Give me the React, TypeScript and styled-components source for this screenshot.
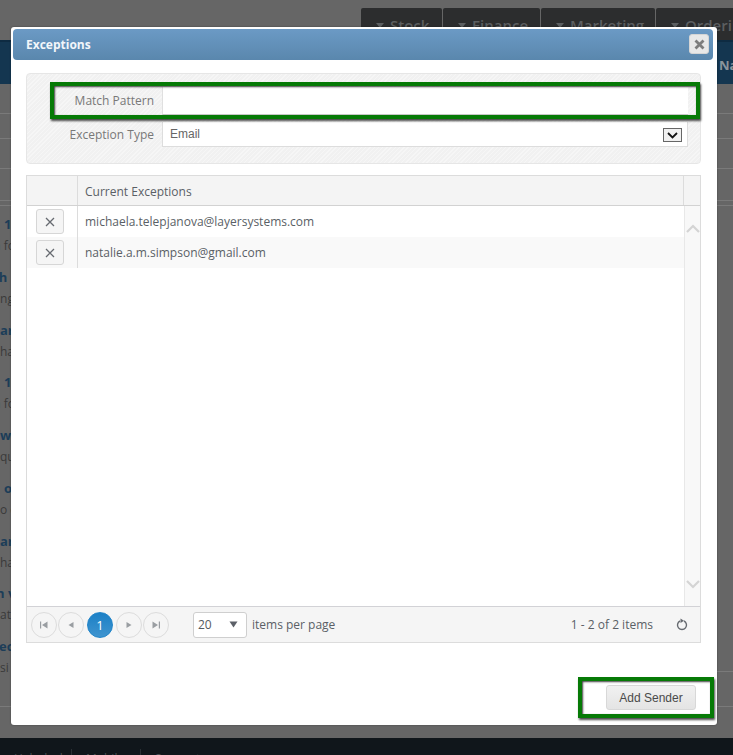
import React from 'react';
import styled, { createGlobalStyle } from 'styled-components';

const GlobalStyle = createGlobalStyle`
    html, body {
        margin: 0;
        padding: 0;
        background: #666666;
    }
    body {
        font-family: "Open Sans", "Liberation Sans", sans-serif;
    }
`;

const Page = styled.div`
    position: relative;
    width: 733px;
    height: 755px;
    overflow: hidden;
    background: #666666;
    display: flex;
    flex-direction: column;
`;

const TopBar = styled.div`
    height: 40px;
    flex: none;
    display: flex;
    justify-content: flex-start;
    gap: 1px;
    padding: 8px 0 0 361px;
    box-sizing: border-box;
    background: #666666;
`;

const NavTab = styled.div<{ $width: number }>`
    width: ${p => p.$width}px;
    flex: none;
    height: 32px;
    box-sizing: border-box;
    padding: 7px 0 0 15px;
    background: #2c2d2e;
    border-radius: 2px 2px 0 0;
    color: #5c5f61;
    font-size: 15px;
    font-weight: 600;
    line-height: 20px;
    white-space: nowrap;
    display: flex;
    gap: 6px;
`;

const NavArrow = styled.span`
    width: 0;
    height: 0;
    margin-top: 8px;
    border-left: 4px solid transparent;
    border-right: 4px solid transparent;
    border-top: 5px solid #5c5f61;
`;

const HeaderBand = styled.div`
    height: 44px;
    flex: none;
    background: #143650;
    border-top: 2px solid #0e2b42;
    box-sizing: border-box;
    display: flex;
    justify-content: flex-end;
    padding: 14px 0 0;
    color: #8a949c;
    font-size: 13px;
    font-weight: 700;
    line-height: 18px;
`;

const BandLabel = styled.span`
    width: 14px;
    overflow: hidden;
`;

const BackRule = styled.div<{ $gap: number }>`
    flex: none;
    margin-top: ${p => p.$gap}px;
    height: 1px;
    background: #7a7a7a;
`;

const ShortRule = styled.div`
    flex: none;
    margin-left: 700px;
    height: 1px;
    background: #7a7a7a;
`;

const NewsList = styled.div`
    flex: none;
    margin-top: 7px;
    height: 458px;
`;

const NewsItem = styled.div`
    height: 52.75px;
    white-space: nowrap;
`;

const NewsTitle = styled.div<{ $shift: number }>`
    margin-left: ${p => p.$shift}px;
    color: #1c3d58;
    font-size: 13px;
    font-weight: 700;
    line-height: 22px;
`;

const NewsText = styled.div<{ $shift: number }>`
    margin-left: ${p => p.$shift}px;
    color: #3a3a3a;
    font-size: 12px;
    line-height: 22px;
`;

const Footer = styled.div`
    margin-top: auto;
    height: 17px;
    flex: none;
    background: #10161b;
    color: #4a4f53;
    font-size: 12px;
    line-height: 16px;
    display: flex;
    padding: 11px 0 0 0;
    box-sizing: border-box;
    overflow: hidden;
`;

const FooterItem = styled.div<{ $width: number; $first?: boolean }>`
    width: ${p => p.$width}px;
    flex: none;
    box-sizing: border-box;
    padding: 2px 0 0 14px;
    border-left: ${p => (p.$first ? 'none' : '1px solid #2a3035')};
`;

const Modal = styled.div`
    position: absolute;
    left: 11px;
    top: 27px;
    width: 706px;
    height: 698px;
    box-sizing: border-box;
    padding: 2px 4px 0 2px;
    background: #ffffff;
    border-radius: 3px;
    display: flex;
    flex-direction: column;
    box-shadow: 0 0 2px rgba(0, 0, 0, 0.4);
`;

const TitleBar = styled.div`
    height: 31px;
    flex: none;
    box-sizing: border-box;
    padding: 0 4px 0 13px;
    display: flex;
    align-items: center;
    justify-content: space-between;
    border-radius: 4px;
    background: linear-gradient(#6b9ac5, #5a87ad);
    color: #f2f6fa;
    font-size: 12px;
    font-weight: 700;
`;

const CloseButton = styled.div`
    width: 20px;
    height: 20px;
    border-radius: 3px;
    background: #e8e8e8;
    border: 1px solid #d5d5d5;
    box-sizing: border-box;
    display: flex;
    align-items: center;
    justify-content: center;
    margin-top: -1px;
`;

const Body = styled.div`
    flex: 1;
    padding: 13px 12px 0 13px;
    display: flex;
    flex-direction: column;
    gap: 11px;
`;

const FormPanel = styled.div`
    height: 91px;
    flex: none;
    box-sizing: border-box;
    padding: 13px 12px 0 0;
    border: 1px solid #e6e6e6;
    border-radius: 4px;
    background: repeating-linear-gradient(135deg, #f6f6f6 0 1px, #f1f1f1 1px 3px);
    display: flex;
    flex-direction: column;
    gap: 7px;
`;

const FormRow = styled.div`
    display: flex;
    align-items: center;
    gap: 8px;
`;

const FieldLabel = styled.label`
    width: 127px;
    flex: none;
    text-align: right;
    color: #787878;
    font-size: 12px;
    line-height: 16px;
`;

const TextField = styled.div`
    flex: 1;
    height: 28px;
    box-sizing: border-box;
    background: #ffffff;
    border-bottom: 1px solid #d0d0d0;
    border-left: 1px solid #e0e0e0;
`;

const SelectField = styled.div`
    flex: 1;
    height: 25px;
    box-sizing: border-box;
    padding: 0 5px 0 7px;
    background: #ffffff;
    border: 1px solid #dddddd;
    border-top: none;
    display: flex;
    align-items: center;
    justify-content: space-between;
    color: #666666;
    font-family: "Liberation Sans", Arial, sans-serif;
    font-size: 12px;
`;

const SelectButton = styled.div`
    width: 19px;
    height: 14px;
    box-sizing: border-box;
    margin-top: 2px;
    border: 1px solid #666666;
    background: #f0f0f0;
    display: flex;
    align-items: center;
    justify-content: center;
`;

const Grid = styled.div`
    height: 468px;
    flex: none;
    box-sizing: border-box;
    border: 1px solid #dcdcdc;
    display: flex;
    flex-direction: column;
    color: #5a5f66;
    font-size: 12px;
`;

const GridHead = styled.div`
    height: 29px;
    flex: none;
    display: flex;
    background: #f4f4f4;
    border-bottom: 1px solid #d2d2d2;
`;

const HeadCell = styled.div`
    flex: 1;
    padding: 1px 0 0 7px;
    line-height: 29px;
    border-left: 1px solid #dcdcdc;
`;

const ActionHead = styled.div`
    width: 50px;
    flex: none;
`;

const ScrollHead = styled.div`
    width: 16px;
    flex: none;
    border-left: 1px solid #dcdcdc;
`;

const GridBody = styled.div`
    flex: 1;
    display: flex;
    min-height: 0;
`;

const Rows = styled.div`
    flex: 1;
`;

const Row = styled.div<{ $alt?: boolean }>`
    height: 31px;
    display: flex;
    background: ${p => (p.$alt ? '#f9f9f9' : '#ffffff')};
`;

const ActionCell = styled.div`
    width: 50px;
    flex: none;
    display: flex;
    align-items: center;
    padding-left: 9px;
    box-sizing: border-box;
`;

const RemoveButton = styled.div`
    width: 28px;
    height: 25px;
    box-sizing: border-box;
    border: 1px solid #d6d6d6;
    border-radius: 3px;
    background: #f5f5f5;
    display: flex;
    align-items: center;
    justify-content: center;
`;

const ValueCell = styled.div`
    flex: 1;
    padding-left: 7px;
    line-height: 31px;
    border-left: 1px solid #dcdcdc;
`;

const Scrollbar = styled.div`
    width: 16px;
    flex: none;
    background: #f8f8f8;
    border-left: 1px solid #e8e8e8;
    box-sizing: border-box;
    display: flex;
    flex-direction: column;
    justify-content: space-between;
    align-items: center;
    padding: 18px 0 17px;
`;

const Pager = styled.div`
    height: 36px;
    box-sizing: border-box;
    flex: none;
    display: flex;
    align-items: center;
    border-top: 1px solid #d2d2d6;
    background: #f5f5f5;
    padding: 0 12px 0 4px;
`;

const PageButton = styled.div<{ $active?: boolean }>`
    width: 26px;
    height: 26px;
    box-sizing: border-box;
    flex: none;
    margin-right: ${p => (p.$active ? '3px' : '1px')};
    margin-left: ${p => (p.$active ? '2px' : '0')};
    border-radius: 50%;
    border: 1px solid ${p => (p.$active ? '#1f84c9' : '#dcdcdc')};
    background: ${p => (p.$active ? 'linear-gradient(#1b80c6, #3f94cf)' : 'transparent')};
    color: #ffffff;
    font-size: 13px;
    display: flex;
    align-items: center;
    justify-content: center;
`;

const PageSize = styled.div`
    width: 54px;
    height: 26px;
    box-sizing: border-box;
    margin-left: 23px;
    padding: 0 8px 0 4px;
    background: #ffffff;
    border: 1px solid #cfcfcf;
    border-radius: 3px;
    display: flex;
    align-items: center;
    justify-content: space-between;
    color: #555a60;
    font-size: 12px;
`;

const SizeLabel = styled.span`
    margin-left: 5px;
`;

const PageInfo = styled.span`
    margin-left: auto;
`;

const RefreshIcon = styled.svg`
    margin-left: 23px;
`;

const ModalFooter = styled.div`
    flex: 1;
    display: flex;
    justify-content: flex-end;
    align-items: flex-start;
    padding: 31px 5px 0 0;
`;

const AddButton = styled.button`
    width: 90px;
    height: 25px;
    padding: 0;
    border: 1px solid #d8d8d8;
    border-radius: 3px;
    background: linear-gradient(#f1f1f1, #e4e4e4);
    color: #4a4a4a;
    font-family: "Liberation Sans", Arial, sans-serif;
    font-size: 12px;
`;

// green callout boxes sit on top of the dialog
const Callout = styled.div<{ $x: number; $y: number; $w: number; $h: number }>`
    position: absolute;
    left: ${p => p.$x}px;
    top: ${p => p.$y}px;
    width: ${p => p.$w}px;
    height: ${p => p.$h}px;
    box-sizing: border-box;
    border: 4px solid #067a06;
    box-shadow: 1px 2px 2px rgba(0, 0, 0, 0.7), inset 1px 1px 2px rgba(0, 0, 0, 0.75);
    pointer-events: none;
`;

const news: [string, number, string, number][] = [
    ['1', 4, 'a fo', -6],
    ['th', -7, 'ing', -3],
    ['ar', 0, 'ha', 0],
    ['1', 4, 'a fo', -6],
    ['wo', 0, 'qu', 0],
    ['on', 4, 'o c', 0],
    ['ar', 0, 'ha', 0],
    ['n v', -4, 'ati', 0],
    ['ece', -1, 'si', 0],
];

const Cross = () => (
    <svg width="10" height="10" viewBox="0 0 10 10">
        <path d="M1 1 L9 9 M9 1 L1 9" stroke="#666a70" strokeWidth="1.3" fill="none" />
    </svg>
);

const Chevron = ({ up }: { up?: boolean }) => (
    <svg width="14" height="9" viewBox="0 0 14 9">
        <path d={up ? 'M1 8 L7 2 L13 8' : 'M1 1 L7 7 L13 1'} stroke="#d4d4d4" strokeWidth="2.2" fill="none" />
    </svg>
);

const PagerIcon = ({ d }: { d: string }) => (
    <svg width="10" height="10" viewBox="0 0 10 10">
        <path d={d} fill="#9a9ea2" />
    </svg>
);

export default function App() {
    return (
        <Page>
            <GlobalStyle />
            <TopBar>
                <NavTab $width={81}><NavArrow />Stock</NavTab>
                <NavTab $width={97}><NavArrow />Finance</NavTab>
                <NavTab $width={114}><NavArrow />Marketing</NavTab>
                <NavTab $width={90}><NavArrow />Ordering</NavTab>
            </TopBar>
            <HeaderBand><BandLabel>Na</BandLabel></HeaderBand>
            <BackRule $gap={29} />
            <BackRule $gap={24} />
            <BackRule $gap={29} />
            <BackRule $gap={31} />
            <BackRule $gap={4} />
            <NewsList>
                {news.map(([title, titleShift, text, textShift], i) => (
                    <NewsItem key={i}>
                        <NewsTitle $shift={titleShift}>{title}</NewsTitle>
                        <NewsText $shift={textShift}>{text}</NewsText>
                    </NewsItem>
                ))}
            </NewsList>
            <ShortRule />
            <BackRule $gap={34} />
            <Footer>
                <FooterItem $width={71} $first>Helpdesk</FooterItem>
                <FooterItem $width={69}>Mobile</FooterItem>
                <FooterItem $width={90}>Support</FooterItem>
            </Footer>

            <Modal>
                <TitleBar>
                    Exceptions
                    <CloseButton>
                        <svg width="11" height="11" viewBox="0 0 11 11">
                            <path d="M1.5 1.5 L9.5 9.5 M9.5 1.5 L1.5 9.5" stroke="#7d7d7d" strokeWidth="2.8" fill="none" />
                        </svg>
                    </CloseButton>
                </TitleBar>
                <Body>
                    <FormPanel>
                        <FormRow>
                            <FieldLabel>Match Pattern</FieldLabel>
                            <TextField />
                        </FormRow>
                        <FormRow>
                            <FieldLabel>Exception Type</FieldLabel>
                            <SelectField>
                                Email
                                <SelectButton>
                                    <svg width="11" height="7" viewBox="0 0 11 7">
                                        <path d="M1 1 L5.5 5.5 L10 1" stroke="#111111" strokeWidth="1.8" fill="none" />
                                    </svg>
                                </SelectButton>
                            </SelectField>
                        </FormRow>
                    </FormPanel>
                    <Grid>
                        <GridHead>
                            <ActionHead />
                            <HeadCell>Current Exceptions</HeadCell>
                            <ScrollHead />
                        </GridHead>
                        <GridBody>
                            <Rows>
                                <Row>
                                    <ActionCell><RemoveButton><Cross /></RemoveButton></ActionCell>
                                    <ValueCell>michaela.telepjanova@layersystems.com</ValueCell>
                                </Row>
                                <Row $alt>
                                    <ActionCell><RemoveButton><Cross /></RemoveButton></ActionCell>
                                    <ValueCell>natalie.a.m.simpson@gmail.com</ValueCell>
                                </Row>
                            </Rows>
                            <Scrollbar>
                                <Chevron up />
                                <Chevron />
                            </Scrollbar>
                        </GridBody>
                        <Pager>
                            <PageButton><PagerIcon d="M1 1.5 H2.2 V8.5 H1 Z M8.5 1.5 V8.5 L3 5 Z" /></PageButton>
                            <PageButton><PagerIcon d="M7.5 2 V8 L2.5 5 Z" /></PageButton>
                            <PageButton $active>1</PageButton>
                            <PageButton><PagerIcon d="M2.5 2 V8 L7.5 5 Z" /></PageButton>
                            <PageButton><PagerIcon d="M1.5 1.5 V8.5 L7 5 Z M7.8 1.5 H9 V8.5 H7.8 Z" /></PageButton>
                            <PageSize>
                                20
                                <svg width="9" height="7" viewBox="0 0 9 7">
                                    <path d="M0.5 0.5 H8.5 L4.5 6.5 Z" fill="#5c6068" />
                                </svg>
                            </PageSize>
                            <SizeLabel>items per page</SizeLabel>
                            <PageInfo>1 - 2 of 2 items</PageInfo>
                            <RefreshIcon width="12" height="13" viewBox="0 0 12 13">
                                <path d="M4 3 A4.5 4.5 0 1 0 8 3" stroke="#666a70" strokeWidth="1.4" fill="none" />
                                <path d="M4.5 0.5 L8 2.8 L4.5 5 Z" fill="#666a70" />
                            </RefreshIcon>
                        </Pager>
                    </Grid>
                    <ModalFooter>
                        <AddButton>Add Sender</AddButton>
                    </ModalFooter>
                </Body>
            </Modal>
            <Callout $x={50} $y={82} $w={650} $h={37} />
            <Callout $x={578} $y={677} $w={136} $h={41} />
        </Page>
    );
}
